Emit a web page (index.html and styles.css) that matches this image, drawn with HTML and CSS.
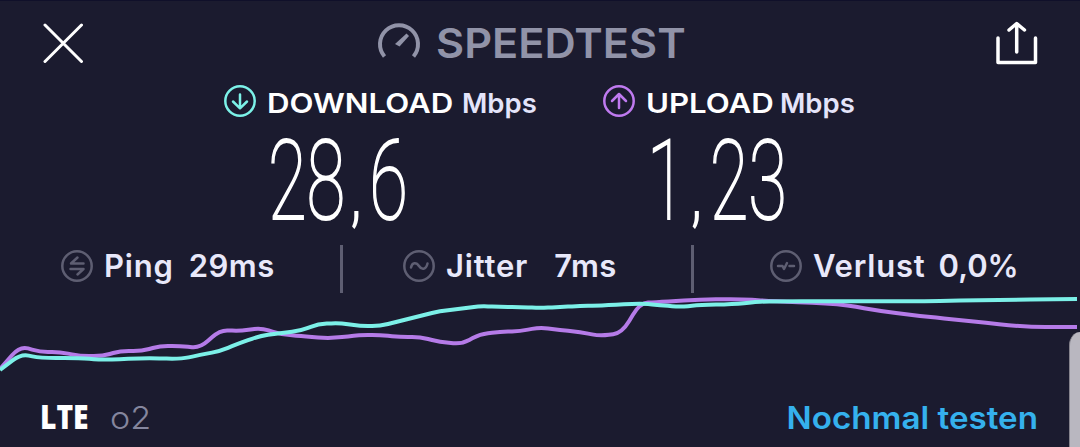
FILE: index.html
```html
<!DOCTYPE html>
<html lang="de">
<head>
  <meta charset="UTF-8" />
  <meta name="viewport" content="width=device-width, initial-scale=1" />
  <title>Speedtest</title>
  <link rel="stylesheet" href="styles.css">
</head>
<body>
  <div class="screen">
    <header class="header">
      <svg class="close" width="42" height="42" viewBox="0 0 42 42">
        <path d="M3 4L39.500 40.500M39.500 4L3 40.500" />
      </svg>
      <div class="brand">
        <svg class="gauge" width="44" height="38" viewBox="0 0 44 38">
          <path class="arc" d="M7.500 35.500A19 19 0 1 1 36.500 35.500" />
          <path class="needle" d="M29.500 12.500L32 15L22.500 25.500L18 23Z" />
        </svg>
        <h1>SPEEDTEST</h1>
      </div>
      <svg class="share" width="42" height="44" viewBox="0 0 42 44">
        <path d="M2 17V41.500H39.500V17M20.700 31V3M13 9L20.700 2.500L28.500 9" />
      </svg>
    </header>

    <section class="results">
      <div class="result">
        <div class="result-title">
          <svg class="icon down" width="34" height="34" viewBox="0 0 34 34">
            <circle cx="17" cy="16" r="14.700" />
            <path d="M17 9.500V23M10 16.500L17 23.300L24 16.500" />
          </svg>
          <span class="name download-name">DOWNLOAD</span><span class="unit">Mbps</span>
        </div>
        <div class="value"><span>28<i>,</i>6</span></div>
      </div>
      <div class="result">
        <div class="result-title">
          <svg class="icon up" width="34" height="34" viewBox="0 0 34 34">
            <circle cx="17" cy="16" r="14.700" />
            <path d="M17 23V9.500M10 16L17 9L24 16" />
          </svg>
          <span class="name upload-name">UPLOAD</span><span class="unit">Mbps</span>
        </div>
        <div class="value"><span>1<i>,</i>23</span></div>
      </div>
    </section>

    <section class="stats">
      <div class="stat ping">
        <svg class="icon" width="34" height="34" viewBox="0 0 34 34">
          <circle cx="17" cy="17" r="14.700" />
          <path d="M23.500 14.500H11L17.500 8.500M10.500 20H23.500L17.500 25.500" />
        </svg>
        <span class="label">Ping</span><span class="number">29ms</span>
      </div>
      <div class="stat jitter">
        <svg class="icon" width="34" height="34" viewBox="0 0 34 34">
          <circle cx="17" cy="17" r="14.700" />
          <path d="M9 18.500C10 13 14.500 13 17 17S24 21 25.500 14.500" />
        </svg>
        <span class="label">Jitter</span><span class="number">7ms</span>
      </div>
      <div class="stat loss">
        <svg class="icon" width="34" height="34" viewBox="0 0 34 34">
          <circle cx="17" cy="17" r="14.700" />
          <path d="M9 17H13.500L15 20L18 14M20.500 17H25" />
        </svg>
        <span class="label">Verlust</span><span class="number">0,0%</span>
      </div>
    </section>

    <svg class="chart" width="1080" height="82" viewBox="0 293 1080 82">
      <path id="uploadLine" class="upload-line" />
      <path id="downloadLine" class="download-line" />
    </svg>

    <footer class="footer">
      <span class="network">LTE</span>
      <span class="provider">o2</span>
      <a class="again">Nochmal testen</a>
    </footer>

    <div class="edge-handle"></div>
  </div>

  <script>
    const download = [
      [0, 370], [21, 354], [40, 358], [80, 358], [103, 360], [145, 358], [181, 359],
      [200, 355], [220, 351], [240, 343], [260, 336], [280, 333], [300, 331], [318, 324],
      [340, 323], [360, 326], [380, 326], [400, 321], [420, 316], [440, 311], [460, 309],
      [480, 306], [500, 307], [520, 307], [540, 308], [560, 307], [580, 306], [600, 305.5],
      [640, 303.5], [660, 305], [680, 307], [700, 305], [740, 304], [762, 301],
      [900, 301.5], [1000, 300], [1077, 299]
    ];
    const upload = [
      [0, 369], [20, 346], [40, 352], [60, 352], [80, 356], [103, 356], [120, 351],
      [142, 351], [160, 346], [180, 346], [200, 348], [220, 330], [240, 331], [261, 328],
      [280, 334], [300, 336], [330, 338.5], [360, 335], [380, 335], [400, 337], [420, 337],
      [440, 342], [462, 344], [480, 334], [500, 332], [520, 331], [540, 327.5], [560, 330],
      [580, 332], [600, 336], [622, 333], [640, 303], [660, 302], [700, 299.5],
      [740, 299], [770, 301], [840, 304], [880, 311], [920, 316], [960, 320],
      [1025, 327], [1077, 327]
    ];

    // rounds each corner a little, the rest stays straight
    function linePath(points) {
      let d = `M${points[0]}`;
      for (let i = 1; i < points.length - 1; i++) {
        const [x, y] = points[i];
        const [px, py] = points[i - 1];
        const [nx, ny] = points[i + 1];
        d += `L${x + (px - x) * 0.4},${y + (py - y) * 0.4}`;
        d += `Q${x},${y} ${x + (nx - x) * 0.4},${y + (ny - y) * 0.4}`;
      }
      return d + `L${points[points.length - 1]}`;
    }

    document.getElementById('downloadLine').setAttribute('d', linePath(download));
    document.getElementById('uploadLine').setAttribute('d', linePath(upload));
  </script>
</body>
</html>
```

FILE: styles.css
```css
body {
  margin: 0;
  background-color: #1b1b2f;
  font-family: Inter, 'Liberation Sans', sans-serif;
  color: #fff;
  overflow: hidden;
}
svg {
  display: block;
  flex: none;
  fill: none;
  stroke-linecap: round;
  stroke-linejoin: round;
}
.screen {
  position: relative;
  width: 1080px;
  height: 447px;
  box-sizing: border-box;
  border-top: 1px solid #10102a;
  overflow: hidden;
}
.header {
  display: flex;
  height: 83px;
  box-sizing: border-box;
  padding: 20px 42px 0 42px;
}
.close {
  stroke: #fff;
  stroke-width: 3;
}
.share {
  margin-left: auto;
  stroke: #fff;
  stroke-width: 3.5;
}
.brand {
  display: flex;
  margin-left: 293px;
  color: #9193a8;
}
.gauge {
  margin: 0 15px 0 0;
}
.arc {
  stroke: #9193a8;
  stroke-width: 4;
  stroke-linecap: butt;
}
.needle {
  fill: #9193a8;
}
h1 {
  margin: 0;
  font-size: 41px;
  font-weight: 600;
  line-height: 45px;
  transform: scaleX(1.055);
  transform-origin: left;
}
.results {
  display: flex;
  height: 155px;
  padding-left: 223px;
}
.result {
  width: 379px;
}
.result-title {
  display: flex;
  align-items: center;
  height: 36px;
  font-size: 27.5px;
  line-height: 30px;
}
.result-title span {
  padding-top: 1px;
}
.icon {
  stroke: #5e5e72;
  stroke-width: 2.5;
}
.down {
  stroke: #7cf2e8;
}
.up {
  stroke: #bf7af0;
}
.name {
  margin-left: 10px;
  font-weight: 600;
  transform: scaleX(1.135);
  transform-origin: left;
}
.download-name {
  width: 188px;
}
.upload-name {
  width: 127px;
}
.unit {
  margin-left: 7px;
  color: #e4e4fa;
  font-weight: 600;
}
.value {
  height: 110px;
  padding-left: 45px;
  font-family: Roboto, sans-serif;
  font-size: 112px;
  font-weight: 100;
  line-height: 121px;
  -webkit-text-stroke: 2px #fff;
}
.value span {
  display: inline-block;
  transform: scaleX(0.63);
  transform-origin: left;
}
.value i {
  display: inline-block;
  margin: 0 14px 0 10px;
  font-size: 72px;
  font-style: normal;
  font-weight: 400;
  line-height: 1;
  -webkit-text-stroke: 0;
}
.stats {
  display: flex;
  height: 54px;
  padding-top: 6px;
  box-sizing: border-box;
  color: #e8e8fa;
  font-size: 31px;
  font-weight: 600;
}
.stat {
  display: flex;
  align-items: center;
  height: 48px;
  padding-bottom: 6px;
  box-sizing: border-box;
}
.ping {
  width: 343px;
  padding-left: 60px;
  border-right: 3px solid #5e5e72;
}
.jitter {
  width: 351px;
  padding-left: 59px;
  border-right: 3px solid #5e5e72;
}
.loss {
  padding-left: 75px;
}
.label {
  margin-left: 10px;
  padding-bottom: 2px;
  letter-spacing: 0.8px;
}
.number {
  margin-left: 15px;
  padding-bottom: 2px;
  letter-spacing: 0.5px;
}
.jitter .number {
  margin-left: 26px;
}
.loss .number {
  margin-left: 13px;
  letter-spacing: 0;
}
.chart path {
  stroke-width: 4;
  stroke-linecap: butt;
}
.upload-line {
  stroke: #b57be8;
}
.download-line {
  stroke: #7cf0e8;
}
.footer {
  display: flex;
  align-items: center;
  height: 72px;
  padding: 12px 42px 0 40px;
  box-sizing: border-box;
  font-size: 31px;
}
.network {
  width: 47px;
  padding-bottom: 3px;
  font-family: 'Open Sans', sans-serif;
  font-size: 34px;
  font-weight: 800;
  transform: scaleX(0.83);
  transform-origin: left;
}
.provider {
  margin-left: 23px;
  color: #85869e;
  font-weight: 300;
  transform: scaleX(1.1);
  transform-origin: left;
}
.again {
  margin-left: auto;
  color: #35b1ed;
  font-weight: 600;
  transform: scaleX(1.07);
  transform-origin: right;
}
.edge-handle {
  position: absolute;
  right: 0;
  top: 331px;
  width: 10px;
  height: 130px;
  border-left: 1px solid #85838d;
  border-top-left-radius: 11px 14px;
  background-color: #b9b7c0;
}
```
